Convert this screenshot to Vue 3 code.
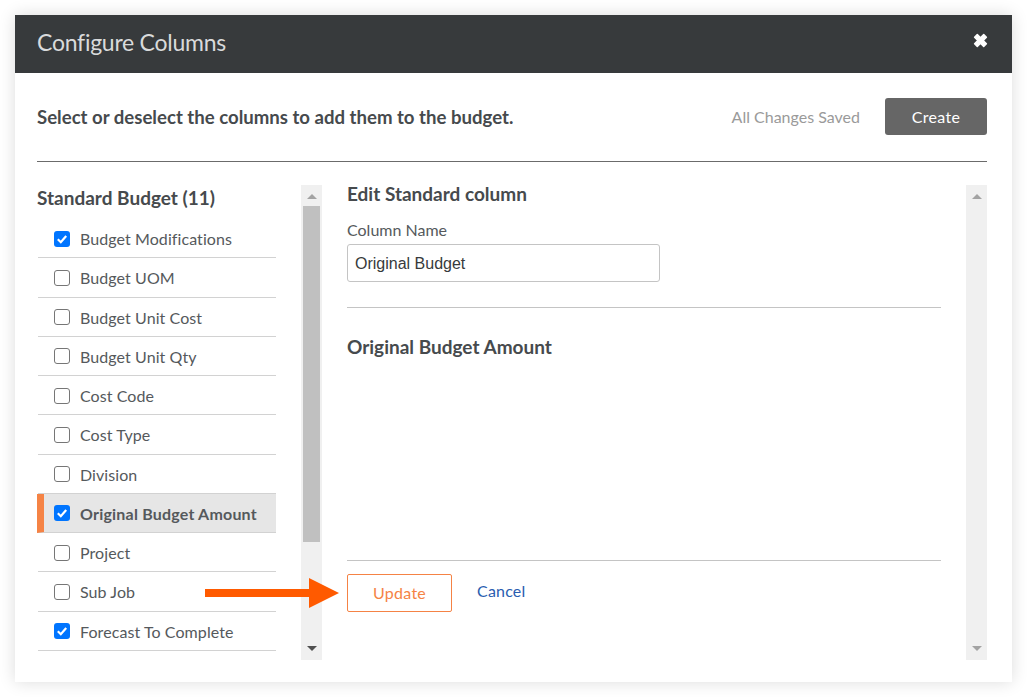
<template>
  <div class="page">
    <div class="modal">
      <header class="modal-header">
        <h1>Configure Columns</h1>
        <svg class="close" viewBox="0 0 14 14" width="15" height="15">
          <path d="M1.5 4 L4 1.5 L7 4.5 L10 1.5 L12.5 4 L9.5 7 L12.5 10 L10 12.5 L7 9.5 L4 12.5 L1.5 10 L4.5 7 Z" fill="#fff" stroke="#fff" stroke-width="1.4" stroke-linejoin="round" />
        </svg>
      </header>

      <div class="modal-body">
        <div class="intro">
          <p class="intro-text">Select or deselect the columns to add them to the budget.</p>
          <span class="saved">All Changes Saved</span>
          <button class="btn-create">Create</button>
        </div>

        <div class="columns">
          <aside class="left">
            <div class="left-list">
              <h2 class="list-title">Standard Budget (11)</h2>
              <ul class="list">
                <li v-for="col in columns" :key="col.name" class="row" :class="{ active: col.active }">
                  <span class="check" :class="{ on: col.checked }">
                    <svg v-if="col.checked" viewBox="0 0 16 16" width="16" height="16">
                      <path d="M3.8 8.3 L6.8 11.2 L12.2 5" fill="none" stroke="#fff" stroke-width="2.2" />
                    </svg>
                  </span>
                  <span class="row-label">{{ col.name }}</span>
                </li>
              </ul>
            </div>
            <div class="scrollbar">
              <span class="arrow-up dark"></span>
              <div class="track"><div class="thumb"></div></div>
              <span class="arrow-down dark"></span>
            </div>
          </aside>

          <section class="right">
            <div class="form">
              <h3 class="edit-title">Edit Standard column</h3>
              <label class="field-label">Column Name</label>
              <input class="field-input" type="text" value="Original Budget" />
              <div class="divider first"></div>
              <h3 class="amount-title">Original Budget Amount</h3>
              <div class="spacer"></div>
              <div class="divider"></div>
              <div class="actions">
                <button class="btn-update">Update</button>
                <a class="cancel">Cancel</a>
              </div>
            </div>
            <div class="scrollbar right-bar">
              <span class="arrow-up"></span>
              <div class="track"></div>
              <span class="arrow-down"></span>
            </div>
          </section>
        </div>
      </div>

      <svg class="callout" viewBox="0 0 134 30" width="134" height="30">
        <path d="M0 11 H104 V0 L134 15 L104 30 V19 H0 Z" fill="#ff5a00" />
      </svg>
    </div>
  </div>
</template>

<script setup>
const columns = [
  { name: "Budget Modifications", checked: true },
  { name: "Budget UOM" },
  { name: "Budget Unit Cost" },
  { name: "Budget Unit Qty" },
  { name: "Cost Code" },
  { name: "Cost Type" },
  { name: "Division" },
  { name: "Original Budget Amount", checked: true, active: true },
  { name: "Project" },
  { name: "Sub Job" },
  { name: "Forecast To Complete", checked: true },
];
</script>

<style>
html,
body {
  margin: 0;
  background: #fff;
}
</style>

<style scoped>
.page {
  height: 697px;
  padding: 15px;
  box-sizing: border-box;
  font-family: Lato, "Liberation Sans", sans-serif;
  color: #464a4d;
}
.modal {
  position: relative;
  width: 997px;
  height: 667px;
  background: #fff;
  box-shadow: 0 0 16px rgba(0, 0, 0, 0.14);
  display: flex;
  flex-direction: column;
}
.modal-header {
  height: 58px;
  background: #373a3c;
  display: flex;
  align-items: center;
  justify-content: space-between;
  padding: 0 24.5px 4px 22px;
  box-sizing: border-box;
  flex-shrink: 0;
}
.modal-header h1 {
  margin: 0;
  font-size: 23px;
  font-weight: 400;
  letter-spacing: -0.25px;
  color: #d9dadb;
}
.close {
  margin-bottom: 4px;
}
.modal-body {
  flex: 1;
  padding: 25px 25px 22px 22px;
  display: flex;
  flex-direction: column;
  min-height: 0;
}
.intro {
  display: flex;
  align-items: center;
  height: 37px;
  padding-bottom: 26px;
  border-bottom: 1px solid #6b6b6b;
}
.intro-text {
  margin: 0;
  flex: 1;
  font-size: 18.6px;
  font-weight: 700;
  color: #464a4d;
}
.saved {
  font-size: 16px;
  color: #9a9a9a;
  margin-right: 25px;
}
.btn-create {
  width: 102px;
  height: 37px;
  background: #666;
  border: none;
  border-radius: 3px;
  color: #fff;
  font-family: inherit;
  font-size: 16px;
  letter-spacing: 0.3px;
}
.columns {
  flex: 1;
  display: flex;
  margin-top: 23px;
  min-height: 0;
}
.left {
  display: flex;
  width: 285px;
  flex-shrink: 0;
}
.left-list {
  width: 264px;
}
.list-title {
  margin: 0;
  padding-top: 1px;
  height: 34.1px;
  line-height: 24px;
  font-size: 19px;
  font-weight: 700;
  color: #464a4d;
  box-sizing: border-box;
}
.list {
  list-style: none;
  margin: 0;
  padding: 0;
  width: 239px;
}
.row {
  display: flex;
  align-items: center;
  height: 39.25px;
  box-sizing: border-box;
  padding: 1px 0 0 16px;
  margin-left: 1px;
  border-bottom: 1px solid #d2d2d2;
  font-size: 16px;
  letter-spacing: 0.08px;
}
.row.active {
  background: #e6e6e6;
  margin-left: 0;
  padding-left: 10px;
  border-left: 7px solid #f58345;
  font-weight: 700;
  letter-spacing: 0.2px;
}
.check {
  width: 16px;
  height: 16px;
  box-sizing: border-box;
  border: 1px solid #767676;
  border-radius: 3px;
  background: #fff;
  margin-right: 10px;
  flex-shrink: 0;
  display: flex;
}
.check.on {
  background: #0075ff;
  border: none;
}
.row-label {
  color: #55595c;
  white-space: nowrap;
}
.scrollbar {
  width: 21px;
  background: #f0f0f0;
  display: flex;
  flex-direction: column;
  align-items: center;
  flex-shrink: 0;
}
.track {
  flex: 1;
  width: 100%;
  padding: 0 2px;
  box-sizing: border-box;
}
.thumb {
  height: 336px;
  background: #c0c0c0;
}
.arrow-up,
.arrow-down {
  width: 0;
  height: 0;
  flex-shrink: 0;
  border-left: 5px solid transparent;
  border-right: 5px solid transparent;
}
.arrow-up {
  margin: 9px 0 7px;
  border-bottom: 5px solid #a3a3a3;
}
.arrow-down {
  margin: 7px 0 9px;
  border-top: 5px solid #a3a3a3;
}
.arrow-down.dark {
  border-top-color: #505050;
}
.right {
  flex: 1;
  display: flex;
  padding-left: 25px;
}
.form {
  width: 594px;
  margin-right: 25px;
  display: flex;
  flex-direction: column;
}
.edit-title {
  margin: -1px 0 0;
  font-size: 19px;
  font-weight: 700;
  line-height: 20px;
  color: #464a4d;
}
.field-label {
  margin-top: 16px;
  line-height: 20px;
  font-size: 16px;
  color: #55595c;
}
.field-input {
  margin-top: 4px;
  width: 313px;
  height: 38px;
  box-sizing: border-box;
  border: 1px solid #c4c4c4;
  border-radius: 3px;
  padding: 2px 7px 0;
  font-family: "Liberation Sans", Arial, sans-serif;
  font-size: 16px;
  color: #373a3c;
  outline: none;
}
.divider {
  height: 1px;
  background: #c4c4c4;
  flex-shrink: 0;
}
.divider.first {
  margin-top: 25px;
}
.amount-title {
  margin: 29px 0 0;
  font-size: 19px;
  font-weight: 700;
  line-height: 20px;
  color: #464a4d;
}
.spacer {
  flex: 1;
}
.actions {
  display: flex;
  align-items: flex-start;
  margin-top: 13px;
  margin-bottom: 48px;
}
.btn-update {
  width: 105px;
  height: 38px;
  padding-bottom: 3px;
  background: #fff;
  border: 1px solid #f58345;
  border-radius: 2px;
  color: #f58345;
  font-family: inherit;
  font-size: 16px;
  letter-spacing: 0.3px;
}
.cancel {
  margin-left: 25px;
  margin-top: 7px;
  line-height: 20px;
  font-size: 16px;
  letter-spacing: 0.2px;
  color: #2a5db0;
}
.callout {
  position: absolute;
  left: 190px;
  top: 563px;
}
</style>
